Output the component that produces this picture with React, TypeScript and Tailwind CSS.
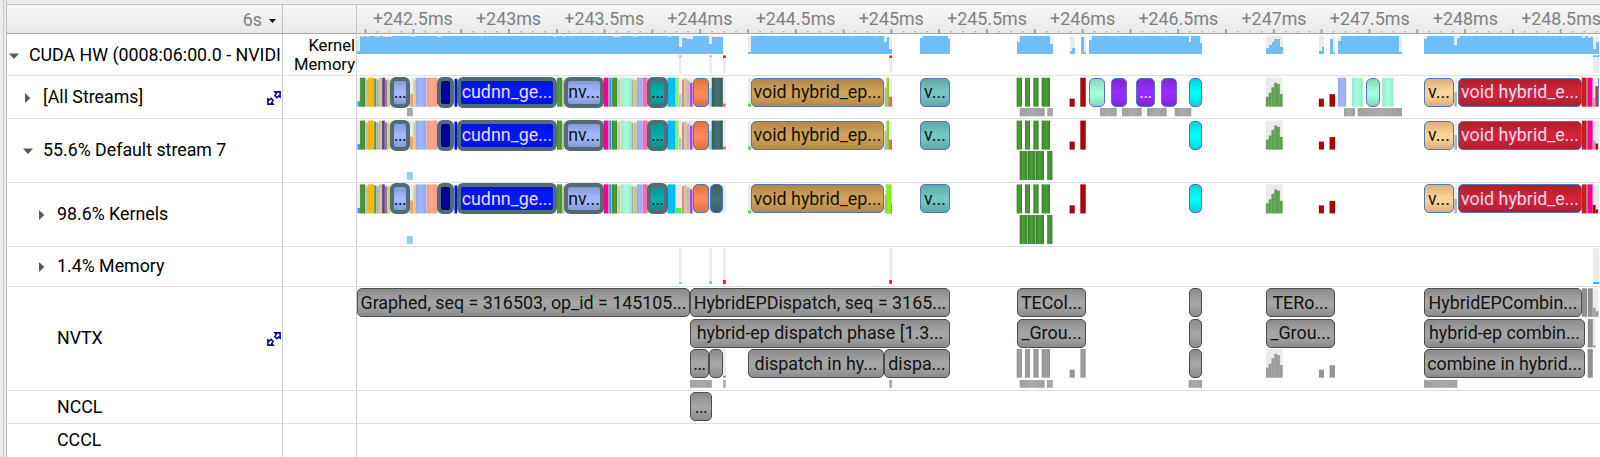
import React from "react";

/* Horizontal origin of the timeline canvas: all times below are given in page units. */
const X0 = 357;
const CANVAS_W = 1243;

type Seg = [number, number, string, number?];
type Box = {
  a: number;
  b: number;
  c: string;
  t?: string;
  dark?: boolean;
  thick?: boolean;
  edge?: string;
  round?: number;
  tiny?: boolean;
};

const GREEN = "#48a235";
const TAN = "#cfc68c";
const GREY = "#a9a9a9";
const BG = "#ebebeb";
const BLUE = "#70bef7";
const RED = "#b90404";

const BASE: Seg[] = [
  [357.3, 360, "#39a0f0", 5.5],
  [360, 365, GREEN],
  [365.6, 368, "#c9c4a8", 27],
  [368, 373.6, "#ffba00"],
  [374, 376, "#55a044", 28],
  [376.2, 378.6, "#b9b59b", 27],
  [378.9, 381.6, TAN],
  [382, 384.6, "#7030a0"],
  [384.8, 387, "#8b8690", 27],
  [387.3, 389.6, "#d8cc80", 27],
  [410, 412.7, "#ff9a70", 13],
  [413.3, 415.3, "#ddd28a", 27],
  [415.5, 426, "#a0b6ff"],
  [426.4, 437, "#ffa98e"],
  [454.3, 457, "#0016d0", 28],
  [557, 561.7, GREEN],
  [562, 564, TAN, 27],
  [603.7, 608.3, "#ff0098"],
  [608.4, 609.3, "#d090b0"],
  [609.4, 611.3, "#129cf2"],
  [612, 617, GREEN],
  [617.6, 620, "#d6cda0", 27],
  [620.7, 631.3, "#a2fddc"],
  [631.5, 633.2, GREY, 27],
  [633.6, 636.7, "#d3c896", 26.5],
  [637, 642.3, "#a0b4fc"],
  [642.7, 647.4, "#fb6db4"],
  [667.7, 675.3, "#00c4ff"],
];

const TAIL: Seg[] = [
  [682, 684, "#fb8080", 27],
  [684.4, 686.5, TAN, 28],
  [687, 689.6, "#bdbdb8", 26],
  [690, 692.4, "#b43cf0", 24],
];

const REDS: Seg[] = [
  [1069.7, 1074.7, RED, 8],
  [1080.4, 1085.7, RED],
  [1319, 1324, RED, 8],
  [1329.7, 1335.2, RED, 12.5],
];

const GREENS: [number, number][] = [
  [1016.7, 1022],
  [1025, 1030],
  [1033.4, 1038.6],
  [1041.7, 1050],
];

const hist = (c: string): Seg[] =>
  [10, 14, 19.5, 24, 22.7, 12.7].map((h, i) => [1266 + i * 2.78, 1268.8 + i * 2.78, c, h] as Seg);

const MAIN: Seg[] = [
  ...BASE,
  ...TAIL,
  [748, 751, "#4ad840", 3],
  [884.6, 886.6, "#b5b5b5", 19],
  [886.7, 889, "#8cdc28"],
  [889, 892, "#ff6268", 10],
  ...GREENS.map(([a, b]) => [a, b, GREEN] as Seg),
  ...REDS,
  ...hist("#5fa552"),
  [1454.6, 1457, "#b5b5b5", 14.5],
  [1582, 1586.7, "#c81f24"],
  [1586.7, 1587.8, "#a08060"],
  [1587.8, 1592.8, "#ff0098"],
];

const MID: Seg[] = [
  [675.4, 678.4, "#88f868"],
  [679, 681.3, "#90e0e0", 12],
  [709.3, 711.6, "#85dcdc", 18.5],
  [711.7, 722.7, "#437370"],
  [723, 725.7, "#ff6268", 3],
];

const BACKS: [number, number][] = [
  [357.3, 447],
  [557, 725.7],
  [748, 751],
  [884.6, 892],
  [1266, 1282.7],
  [1454.6, 1457.4],
  [1593, 1599.3],
];

const ROW_ALL: Seg[] = [
  ...MAIN,
  ...MID,
  [1338, 1346.3, "#a0b6ff"],
  [1352, 1363, "#a2fddc"],
  [1382.3, 1393.5, "#a2fddc"],
  [1593, 1595.6, "#b5b5b5", 9],
  [1595.7, 1598.2, "#b8383c", 20.5],
  [1598.4, 1599.2, "#5878d0"],
];
const ROW_S7: Seg[] = [...MAIN, ...MID, [1593, 1595.6, "#b5b5b5", 9], [1595.7, 1598.2, RED, 6]];
const ROW_K: Seg[] = [
  ...MAIN,
  [675.7, 681.3, "#55f840", 5.5],
  [886.5, 891.3, "#86fa10"],
  [1593, 1595.7, RED, 8.5],
  [1595.8, 1598.2, RED, 4],
];

const CLUSTER: Seg[] = [
  [1019.7, 1027.4, GREEN],
  [1027.8, 1035.4, GREEN],
  [1035.8, 1044, GREEN],
  [1047.2, 1052.4, GREEN],
];

const SLATE = "#506d73";
const MAIN_BOXES: Box[] = [
  { a: 390, b: 410, c: "#a0b6ff", t: "...", thick: true, tiny: true },
  { a: 437, b: 454, c: "#0000a0", thick: true },
  { a: 457, b: 557, c: "#0018ff", t: "cudnn_ge...", dark: true, thick: true },
  { a: 564, b: 604, c: "#a0b6ff", t: "nv...", thick: true },
  { a: 647, b: 668, c: "#00b0ac", t: "...", thick: true, tiny: true },
  { a: 693, b: 709, c: "#ff8855" },
  { a: 751, b: 884, c: "#d0a258", t: "void hybrid_ep..." },
  { a: 920, b: 950, c: "#73c6c4", t: "v..." },
  { a: 1189, b: 1202, c: "#00fcff" },
  { a: 1424, b: 1454, c: "#ffd298", t: "v..." },
  { a: 1458, b: 1582, c: "#d02438", t: "void hybrid_e...", dark: true },
];
const ALL_BOXES: Box[] = [
  ...MAIN_BOXES,
  { a: 1089, b: 1105, c: "#a2fddc" },
  { a: 1111, b: 1127, c: "#982cff" },
  { a: 1136, b: 1155, c: "#982cff", t: "...", dark: true, tiny: true },
  { a: 1161, b: 1177, c: "#982cff" },
  { a: 1366, b: 1380, c: "#a2fddc", round: 6 },
];
const KERNEL_BOXES: Box[] = [...MAIN_BOXES, { a: 710, b: 723, c: "#437370" }];

function Defs() {
  return (
    <svg width="0" height="0" className="absolute">
      <defs>
        <linearGradient id="side" x1="0" x2="1" y1="0" y2="0">
          <stop offset="0" stopColor="#000" stopOpacity="0.2" />
          <stop offset="0.5" stopColor="#000" stopOpacity="0" />
          <stop offset="1" stopColor="#000" stopOpacity="0.2" />
        </linearGradient>
      </defs>
    </svg>
  );
}

/* Narrow, unlabelled events drawn as a bar chart standing on the lane's bottom edge. */
function Bars({ y, h = 29, segs, backs = [] }: { y: number; h?: number; segs: Seg[]; backs?: [number, number][] }) {
  return (
    <svg
      className="absolute left-0 top-0 overflow-hidden"
      width={CANVAS_W}
      height={y + h + 1}
      viewBox={`${X0} 0 ${CANVAS_W} ${y + h + 1}`}
    >
      {backs.map(([a, b]) => (
        <rect key={a} x={a} y={y} width={b - a} height={h} fill={BG} />
      ))}
      {segs.map(([a, b, c, sh = h], i) => (
        <g key={i}>
          <rect x={a} y={y + h - sh} width={b - a} height={sh} fill={c} />
          {sh > 4 && (
            <rect
              x={a}
              y={y + h - sh}
              width={b - a}
              height={sh}
              fill="url(#side)"
              opacity={c === GREEN || c === RED || c === "#437370" ? 1 : 0.35}
            />
          )}
        </g>
      ))}
    </svg>
  );
}

function Event({ y, h = 29, box }: { y: number; h?: number; box: Box }) {
  const g = box.thick ? 1 : 0;
  return (
    <div
      className={
        "absolute flex items-center justify-center overflow-hidden whitespace-nowrap border-solid text-[17.85px] leading-none " +
        (box.thick ? "border-[4px] " : "border ") +
        (box.dark ? "text-[#eadcf4] " : "text-[#111] ") +
        (box.tiny ? "tracking-[-0.5px]" : "")
      }
      style={{
        left: box.a - X0,
        width: box.b - box.a,
        top: y - g,
        height: h + 2 * g,
        borderRadius: box.round ?? (box.thick ? 6 : 5),
        borderColor: box.thick ? SLATE : box.edge ?? "#5573b8",
        background: `linear-gradient(rgba(0,0,0,.16), rgba(0,0,0,0) 45%, rgba(0,0,0,0) 60%, rgba(0,0,0,.16)), ${box.c}`,
      }}
    >
      {box.t}
    </div>
  );
}

function Events({ y, boxes }: { y: number; boxes: Box[] }) {
  return (
    <>
      {boxes.map((b) => (
        <Event key={b.a} y={y} box={b} />
      ))}
    </>
  );
}

const grey = (a: number, b: number, t?: string, tiny?: boolean): Box => ({
  a,
  b,
  c: "#a5a5a5",
  t,
  tiny,
  edge: "#4c4c4c",
});

function Strips({ y, h = 8.3, at, c = "#ababab" }: { y: number; h?: number; at: [number, number][]; c?: string }) {
  return <Bars y={y} h={h} segs={at.map(([a, b]) => [a, b, c] as Seg)} />;
}

/* Utilisation profile: [start, end, top] steps above a common floor. */
const PROFILE: [number, number, number][] = [
  [357.3, 360, 51],
  [360, 679, 36],
  [679, 681.7, 47],
  [681.7, 686, 37.5],
  [686, 692.5, 38.5],
  [692.5, 709, 36],
  [709, 712, 44.3],
  [712, 722.8, 36.5],
  [748, 751, 52],
  [751, 883.7, 36],
  [883.7, 887, 42.3],
  [887, 889.4, 36.7],
  [889.4, 892, 49],
  [920, 923, 37.5],
  [923, 947.5, 36],
  [947.5, 950, 38.5],
  [1016.7, 1019.7, 42],
  [1019.7, 1050, 36],
  [1050, 1052.7, 44.3],
  [1069.7, 1072.2, 51],
  [1072.2, 1075, 48],
  [1080.7, 1083.6, 37],
  [1083.6, 1086, 52.3],
  [1089, 1091.7, 40],
  [1091.7, 1188.7, 36],
  [1188.7, 1191.4, 41.6],
  [1191.4, 1200, 36],
  [1200, 1202.3, 43],
  [1266, 1269, 48],
  [1269, 1272, 45.3],
  [1272, 1274.4, 41.6],
  [1274.4, 1279.7, 39.3],
  [1279.7, 1282.7, 46.5],
  [1319, 1321.7, 51],
  [1321.7, 1324, 47],
  [1329.7, 1332.7, 38.7],
  [1332.7, 1335.3, 52.3],
  [1338, 1341, 41],
  [1341, 1399, 36],
  [1399, 1402, 51.5],
  [1424, 1426.7, 39.3],
  [1426.7, 1454.4, 36],
  [1454.4, 1457.4, 45],
  [1457.4, 1459.7, 37.5],
  [1459.7, 1582.3, 36],
  [1582.3, 1585, 38.3],
  [1585, 1587.7, 36],
  [1587.7, 1590, 38.3],
  [1590, 1593, 36.7],
  [1593, 1596, 48.7],
  [1596, 1599.2, 41.7],
];
const CHIPS: [number, number][] = [
  [361, 364],
  [366, 369],
  [375, 380],
  [383, 392],
  [410, 415],
  [437, 441],
  [553, 557],
  [563, 565],
  [613, 621],
  [633, 638],
  [668, 671],
];
const MEMORY: [number, number, string, number][] = [
  [679, 681.6, "#60d8e0", 2],
  [709.3, 712, "#60d8e0", 3],
  [723, 725.8, "#ff1020", 4],
  [889.3, 892, "#ff1020", 4],
  [1593, 1599.2, "#18c0f8", 2],
];

function Utilisation() {
  return (
    <svg className="absolute left-0 top-0" width={CANVAS_W} height={41} viewBox={`${X0} 34 ${CANVAS_W} 41`}>
      {PROFILE.map(([a, b, t]) => (
        <React.Fragment key={a}>
          <rect x={a} y={36} width={b - a} height={17.7} fill={BG} shapeRendering="crispEdges" />
          <rect x={a} y={t} width={b - a} height={53.7 - t} fill={BLUE} shapeRendering="crispEdges" />
        </React.Fragment>
      ))}
      {CHIPS.map(([a, b]) => (
        <rect key={a} x={a} y={36} width={b - a} height={0.8} fill={BG} />
      ))}
      {MEMORY.map(([a, b, c]) => (
        <g key={a}>
          <rect x={a} y={55.3} width={b - a} height={18} fill={BG} />
          <rect x={a} y={55.5} width={b - a} height={c === "#ff1020" ? 2.5 : 1.3} fill={c} />
        </g>
      ))}
    </svg>
  );
}

const LABELS = [
  "+242.5ms",
  "+243ms",
  "+243.5ms",
  "+244ms",
  "+244.5ms",
  "+245ms",
  "+245.5ms",
  "+246ms",
  "+246.5ms",
  "+247ms",
  "+247.5ms",
  "+248ms",
  "+248.5ms",
];

function Ruler() {
  return (
    <div className="relative flex h-full flex-1 overflow-hidden">
      <div className="ml-[8px] flex items-center">
        {LABELS.map((l) => (
          <div key={l} className="flex w-[95.7px] shrink-0 justify-center text-[17.85px] leading-none text-[#808080]">
            {l}
          </div>
        ))}
      </div>
      <svg className="absolute bottom-0 left-0" width={CANVAS_W} height={6} viewBox={`${X0} 27 ${CANVAS_W} 6`}>
        {Array.from({ length: 106 }, (_, i) => {
          const x = 365.6 + (i - 1) * 11.95;
          const major = (i - 1) % 4 === 0;
          return major ? (
            <rect key={i} x={x - 1} y={29} width={2} height={4} fill="#a4a4a4" />
          ) : (
            <rect key={i} x={x - 1} y={31} width={2} height={1.5} fill="#b8b8b8" />
          );
        })}
      </svg>
    </div>
  );
}

function Caret({ open }: { open: boolean }) {
  return (
    <svg width="10" height="10" viewBox="0 0 10 10" fill="#5a5a5a" className="shrink-0">
      {open ? <path d="M0 2.4h10L5 8z" /> : <path d="M2 0v10l5.4-5z" />}
    </svg>
  );
}

function LinkIcon() {
  return (
    <svg
      width="14"
      height="14"
      viewBox="0 0 14 14"
      fill="none"
      stroke="#08089a"
      strokeWidth="1.6"
      className="ml-auto mr-[1.5px] shrink-0"
    >
      <path d="M8 .9h5.1v5l-1.3-.9-1.9 1.6-2-2L9.3 2.4z" />
      <path d="M6 13.1H.9V8.1l1.3.9 1.9-1.6 2 2-1.4 2.2z" />
    </svg>
  );
}

function Row({
  height,
  indent,
  open,
  label,
  link,
  side,
  children,
}: {
  height: string;
  indent: string;
  open?: boolean;
  label: string;
  link?: boolean;
  side?: React.ReactNode;
  children?: React.ReactNode;
}) {
  return (
    <div className={"flex shrink-0 border-b border-[#dedede] " + height}>
      <div
        className={
          "flex w-[275px] shrink-0 items-center overflow-hidden whitespace-nowrap text-[17.8px] leading-none text-black " + indent
        }
      >
        {open !== undefined ? <Caret open={open} /> : <span className="w-[10px]" />}
        <span className="mb-[2px] ml-[10px]">{label}</span>
        {link && <LinkIcon />}
      </div>
      <div className="flex w-[75px] shrink-0 flex-col items-end border-x border-[#cfcfcf] pr-[1px] text-[16.6px] leading-[19px] text-black">
        {side}
      </div>
      <div className="relative flex-1 overflow-hidden">{children}</div>
    </div>
  );
}

export default function App() {
  return (
    <div className="flex h-[457px] w-[1600px] overflow-hidden bg-[#ececec] font-['Roboto',sans-serif]">
      <Defs />
      <div className="w-[4px] shrink-0 border-r border-[#cacaca]" />
      <div className="w-[3px] shrink-0 border-r border-[#bebebe]" />
      <div className="flex min-w-0 flex-1 flex-col">
        <div className="h-[5px] shrink-0 border-b border-[#c2c2c2]" />
        <div className="flex min-h-0 flex-1 flex-col overflow-hidden bg-white">
          <div className="flex h-[29px] shrink-0 border-b border-[#a8a8a8] bg-gradient-to-b from-[#f7f7f7] to-[#e9e9e9]">
            <div className="flex w-[275px] shrink-0 items-center justify-end gap-[7px] pr-[6px] pt-[1px] text-[17.8px] leading-none text-[#808080]">
              6s
              <svg width="7" height="4" viewBox="0 0 7 4" className="mt-[2px]">
                <path d="M0 0h7L3.5 4z" fill="#111" />
              </svg>
            </div>
            <div className="w-[75px] shrink-0 border-x border-[#c4c4c4]" />
            <Ruler />
          </div>

          <Row
            height="h-[42px]"
            indent="pl-[2px] pt-[2px]"
            open
            label="CUDA HW (0008:06:00.0 - NVIDI"
            side={
              <>
                <span className="mt-[2px]">Kernel</span>
                <span>Memory</span>
              </>
            }
          >
            <Utilisation />
          </Row>

          <Row height="h-[43px]" indent="pl-[16px] pt-[1px]" open={false} label="[All Streams]" link>
            <Bars y={1.7} segs={ROW_ALL} backs={BACKS} />
            <Events y={1.5} boxes={ALL_BOXES} />
            <Strips
              y={32}
              at={[
                [407, 412.7],
                [1019.7, 1044.7],
                [1047.3, 1052.7],
                [1100, 1116.7],
                [1122, 1141.7],
                [1147, 1166.7],
                [1174.7, 1191.3],
                [1344, 1355],
                [1357.7, 1402],
              ]}
            />
          </Row>

          <Row height="h-[64px]" indent="pl-[16px]" open label="55.6% Default stream 7">
            <Bars y={1.6} segs={ROW_S7} backs={BACKS} />
            <Events y={1.5} boxes={MAIN_BOXES} />
            <Bars y={32} segs={CLUSTER} />
            <Strips y={53} h={8} at={[[407, 412.7]]} c="#98d4ff" />
          </Row>

          <Row height="h-[64px]" indent="pl-[30px]" open={false} label="98.6% Kernels">
            <Bars y={1.4} segs={ROW_K} backs={BACKS} />
            <Events y={1.4} boxes={KERNEL_BOXES} />
            <Bars y={32} segs={CLUSTER} />
            <Strips y={53} h={8} at={[[407, 412.7]]} c="#98d4ff" />
          </Row>

          <Row height="h-[40px]" indent="pl-[30px]" open={false} label="1.4% Memory">
            <Bars
              y={1.3}
              h={35.7}
              segs={MEMORY.map(([a, b, c, h]) => [a, b, c, h] as Seg)}
              backs={MEMORY.map(([a, b]) => [a, b] as [number, number])}
            />
          </Row>

          <Row height="h-[104px]" indent="pl-[30px]" label="NVTX" link>
            <Events
              y={1.4}
              boxes={[
                grey(357, 690, "Graphed, seq = 316503, op_id = 145105..."),
                grey(690, 950, "HybridEPDispatch, seq = 3165..."),
                grey(1017, 1086, "TECol..."),
                grey(1189, 1202),
                grey(1266, 1335, "TERo..."),
                grey(1424, 1582, "HybridEPCombin..."),
              ]}
            />
            <Bars
              y={1.3}
              h={28.5}
              backs={[[1593, 1598.5]]}
              segs={[
                [1582, 1587, "#929292"],
                [1587.8, 1592.8, "#929292"],
                [1593, 1595.7, GREY, 9],
                [1595.8, 1598.3, "#999", 5.5],
              ]}
            />
            <Events
              y={31.5}
              boxes={[
                grey(690, 950, "hybrid-ep dispatch phase [1.3..."),
                grey(1017, 1086, "_Grou..."),
                grey(1189, 1202),
                grey(1266, 1335, "_Grou..."),
                grey(1424, 1585, "hybrid-ep combin..."),
              ]}
            />
            <Bars
              y={32}
              h={28.5}
              backs={[[1593, 1595.7]]}
              segs={[
                [1587.8, 1592.8, "#929292"],
                [1593, 1595.7, GREY, 2],
              ]}
            />
            <Bars
              y={62}
              h={28.7}
              backs={[
                [723, 725.7],
                [1266, 1282.7],
              ]}
              segs={[
                [723, 725.7, "#999", 2],
                ...GREENS.map(([a, b]) => [a, b, "#9e9e9e"] as Seg),
                [1069.7, 1074.7, "#999", 8],
                [1080.4, 1085.7, "#9e9e9e"],
                ...hist("#a0a0a0"),
                [1319, 1324, "#999", 8],
                [1329.7, 1335, "#999", 12.5],
                [1587.8, 1592.8, "#929292"],
              ]}
            />
            <Events
              y={62}
              boxes={[
                grey(690, 709, "...", true),
                grey(709, 723),
                grey(748, 884, "dispatch in hy..."),
                grey(884, 950, "dispa..."),
                grey(1189, 1202),
                grey(1424, 1585, "combine in hybrid..."),
              ]}
            />
            <Strips
              y={93}
              h={7.8}
              at={[
                [690, 711.8],
                [723.3, 725.7],
                [889.3, 892],
                [1019.7, 1044.6],
                [1047, 1052.7],
                [1188.7, 1202],
                [1424, 1457.3],
              ]}
            />
          </Row>

          <Row height="h-[33px]" indent="pl-[30px] pt-[2px]" label="NCCL">
            <Events y={1} boxes={[grey(690, 712, "...", true)]} />
          </Row>
          <Row height="h-[34px]" indent="pl-[30px]" label="CCCL" />
        </div>
      </div>
    </div>
  );
}
